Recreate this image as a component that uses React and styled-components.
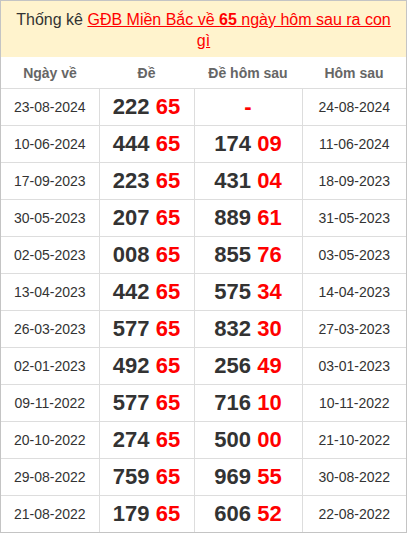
import React from 'react'
import styled, { createGlobalStyle } from 'styled-components'

const GlobalStyle = createGlobalStyle`
  html, body {
    margin: 0;
    padding: 0;
    background: #fff;
  }
  body {
    font-family: "Liberation Sans", Arial, sans-serif;
  }
`

const rows = [
  ['23-08-2024', '222', '65', null, null, '24-08-2024'],
  ['10-06-2024', '444', '65', '174', '09', '11-06-2024'],
  ['17-09-2023', '223', '65', '431', '04', '18-09-2023'],
  ['30-05-2023', '207', '65', '889', '61', '31-05-2023'],
  ['02-05-2023', '008', '65', '855', '76', '03-05-2023'],
  ['13-04-2023', '442', '65', '575', '34', '14-04-2023'],
  ['26-03-2023', '577', '65', '832', '30', '27-03-2023'],
  ['02-01-2023', '492', '65', '256', '49', '03-01-2023'],
  ['09-11-2022', '577', '65', '716', '10', '10-11-2022'],
  ['20-10-2022', '274', '65', '500', '00', '21-10-2022'],
  ['29-08-2022', '759', '65', '969', '55', '30-08-2022'],
  ['21-08-2022', '179', '65', '606', '52', '22-08-2022'],
]

const Wrapper = styled.div`
  width: 407px;
  height: 533px;
  box-sizing: border-box;
  border: 1px solid #c4c4c4;
  overflow: hidden;
`

const Title = styled.div`
  background: #fff3cd;
  color: #333;
  font-size: 16px;
  line-height: 21px;
  text-align: center;
  padding: 8px 10px 6px;
  height: 56px;
  box-sizing: border-box;
`

const TitleLink = styled.a`
  color: #f00;
  text-decoration: underline;
`

const Table = styled.table`
  width: 100%;
  border-collapse: collapse;
  table-layout: fixed;
`

const HeadCell = styled.th`
  width: ${p => p.$w}px;
  height: 31px;
  padding: 0;
  font-size: 14px;
  font-weight: bold;
  color: #666;
  text-align: center;
  border-bottom: 1px solid #ddd;
`

const Cell = styled.td`
  height: 36px;
  padding: 0;
  text-align: center;
  border: 1px solid #ddd;
  border-top: none;
  font-size: 14px;
  color: #333;
  &:first-child { border-left: none; }
  &:last-child { border-right: none; }
  tr:last-child & { border-bottom: none; }
`

const Num = styled.span`
  font-size: 22px;
  font-weight: bold;
  color: #333;
`

const Red = styled.span`
  color: #f00;
`

export default function App() {
  return (
    <>
      <GlobalStyle />
      <Wrapper>
        <Title>
          Thống kê{' '}
          <TitleLink>
            GĐB Miền Bắc về <b>65</b> ngày hôm sau ra con gì
          </TitleLink>
        </Title>
        <Table>
          <thead>
            <tr>
              <HeadCell $w={98}>Ngày về</HeadCell>
              <HeadCell $w={95}>Đề</HeadCell>
              <HeadCell $w={108}>Đề hôm sau</HeadCell>
              <HeadCell $w={104}>Hôm sau</HeadCell>
            </tr>
          </thead>
          <tbody>
            {rows.map(r => (
              <tr key={r[0]}>
                <Cell>{r[0]}</Cell>
                <Cell>
                  <Num>
                    {r[1]} <Red>{r[2]}</Red>
                  </Num>
                </Cell>
                <Cell>
                  <Num>
                    {r[3] ? (
                      <>
                        {r[3]} <Red>{r[4]}</Red>
                      </>
                    ) : (
                      <Red>-</Red>
                    )}
                  </Num>
                </Cell>
                <Cell>{r[5]}</Cell>
              </tr>
            ))}
          </tbody>
        </Table>
      </Wrapper>
    </>
  )
}
